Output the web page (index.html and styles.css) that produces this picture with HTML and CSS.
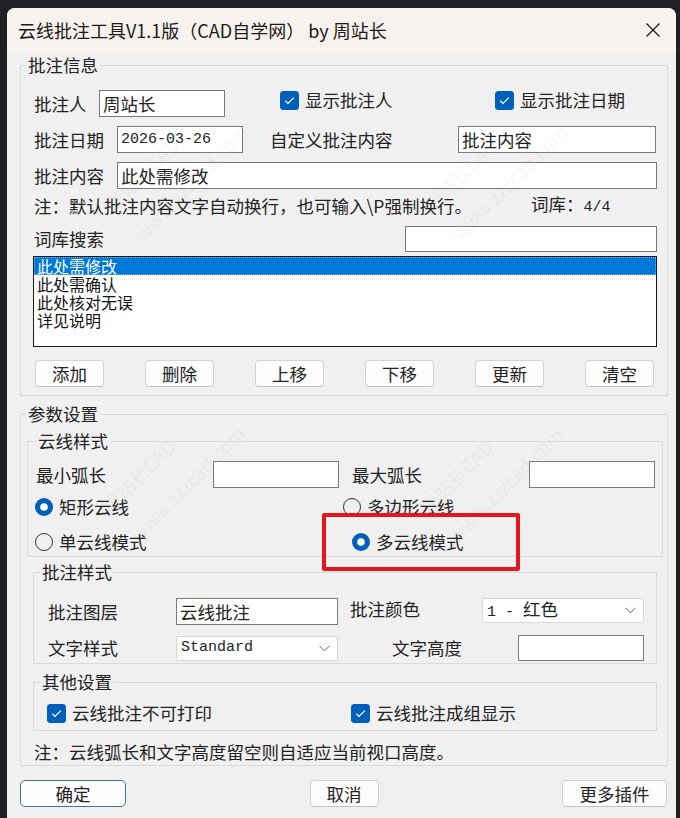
FILE: index.html
```html
<!DOCTYPE html>
<html lang="zh-CN">
<head>
  <meta charset="UTF-8" />
  <title>云线批注工具</title>
  <link rel="stylesheet" href="styles.css">
</head>
<body>

  <div class="window">
    <header class="titlebar">
      <span class="title">云线批注工具V1.1版（CAD自学网） by 周站长</span>
      <svg class="close" width="16" height="16" viewBox="0 0 16 16"><path d="M1.5 1.5 L14.5 14.5 M14.5 1.5 L1.5 14.5" stroke="#1a1a1a" stroke-width="1.3" fill="none"/></svg>
    </header>

    <main class="content">

      <fieldset class="group group-info">
        <legend>批注信息</legend>

        <div class="row">
          <label class="lbl lbl-person">批注人</label>
          <input class="field field-person" type="text" value="周站长" />
          <span class="check check-show-person">
            <svg width="19" height="19" viewBox="0 0 19 19"><rect width="19" height="19" rx="3.5" fill="#005fb8"/><path d="M5.2 9.8 L8 12.5 L13.8 6.7" stroke="#fff" stroke-width="1.2" fill="none"/></svg>
            显示批注人
          </span>
          <span class="check">
            <svg width="19" height="19" viewBox="0 0 19 19"><rect width="19" height="19" rx="3.5" fill="#005fb8"/><path d="M5.2 9.8 L8 12.5 L13.8 6.7" stroke="#fff" stroke-width="1.2" fill="none"/></svg>
            显示批注日期
          </span>
        </div>

        <div class="row row-gap">
          <label class="lbl lbl-wide">批注日期</label>
          <input class="field field-date mono" type="text" value="2026-03-26" />
          <label class="lbl lbl-custom">自定义批注内容</label>
          <input class="field field-custom" type="text" value="批注内容" />
        </div>

        <div class="row row-gap">
          <label class="lbl lbl-wide">批注内容</label>
          <input class="field field-grow" type="text" value="此处需修改" />
        </div>

        <div class="hint-row">
          <span class="hint">注：默认批注内容文字自动换行，也可输入\P强制换行。</span>
          <span>词库：<span class="mono">4/4</span></span>
        </div>

        <div class="row row-search">
          <label class="lbl">词库搜索</label>
          <input class="field field-search" type="text" value="" />
        </div>

        <ul class="listbox">
          <li class="selected">此处需修改</li>
          <li>此处需确认</li>
          <li>此处核对无误</li>
          <li>详见说明</li>
        </ul>

        <div class="btn-row">
          <button class="btn">添加</button>
          <button class="btn">删除</button>
          <button class="btn">上移</button>
          <button class="btn">下移</button>
          <button class="btn">更新</button>
          <button class="btn">清空</button>
        </div>
      </fieldset>

      <fieldset class="group group-params">
        <legend>参数设置</legend>

        <fieldset class="sub sub-cloud">
          <legend>云线样式</legend>
          <div class="row">
            <label class="lbl lbl-arc">最小弧长</label>
            <input class="field field-arc" type="text" value="" />
            <label class="lbl lbl-arc lbl-arc-max">最大弧长</label>
            <input class="field field-arc" type="text" value="" />
          </div>
          <div class="radio-row radio-row-1">
            <span class="radio radio-rect">
              <svg width="18" height="18" viewBox="0 0 18 18"><circle cx="9" cy="9" r="9" fill="#005fb8"/><circle cx="9" cy="9" r="3.8" fill="#fff"/></svg>
              矩形云线
            </span>
            <span class="radio">
              <svg width="18" height="18" viewBox="0 0 18 18"><circle cx="9" cy="9" r="8.5" fill="none" stroke="#333" stroke-width="1"/></svg>
              多边形云线
            </span>
          </div>
          <div class="radio-row radio-row-2">
            <span class="radio radio-single">
              <svg width="18" height="18" viewBox="0 0 18 18"><circle cx="9" cy="9" r="8.5" fill="none" stroke="#333" stroke-width="1"/></svg>
              单云线模式
            </span>
            <span class="radio">
              <svg width="18" height="18" viewBox="0 0 18 18"><circle cx="9" cy="9" r="9" fill="#005fb8"/><circle cx="9" cy="9" r="3.8" fill="#fff"/></svg>
              多云线模式
            </span>
          </div>
        </fieldset>

        <fieldset class="sub sub-note">
          <legend>批注样式</legend>
          <div class="row">
            <label class="lbl lbl-style">批注图层</label>
            <input class="field field-layer" type="text" value="云线批注" />
            <label class="lbl lbl-color">批注颜色</label>
            <div class="select select-color">
              <span><span class="mono">1 - </span>红色</span>
              <svg width="11" height="7" viewBox="0 0 11 7"><path d="M0.5 0.8 L5.5 5.8 L10.5 0.8" stroke="#666" stroke-width="1" fill="none"/></svg>
            </div>
          </div>
          <div class="row row-style-2">
            <label class="lbl lbl-style">文字样式</label>
            <div class="select select-style">
              <span class="mono">Standard</span>
              <svg width="11" height="7" viewBox="0 0 11 7"><path d="M0.5 0.8 L5.5 5.8 L10.5 0.8" stroke="#666" stroke-width="1" fill="none"/></svg>
            </div>
            <label class="lbl lbl-height">文字高度</label>
            <input class="field field-height" type="text" value="" />
          </div>
        </fieldset>

        <fieldset class="sub sub-other">
          <legend>其他设置</legend>
          <div class="row row-checks">
            <span class="check check-noprint">
              <svg width="19" height="19" viewBox="0 0 19 19"><rect width="19" height="19" rx="3.5" fill="#005fb8"/><path d="M5.2 9.8 L8 12.5 L13.8 6.7" stroke="#fff" stroke-width="1.2" fill="none"/></svg>
              云线批注不可打印
            </span>
            <span class="check">
              <svg width="19" height="19" viewBox="0 0 19 19"><rect width="19" height="19" rx="3.5" fill="#005fb8"/><path d="M5.2 9.8 L8 12.5 L13.8 6.7" stroke="#fff" stroke-width="1.2" fill="none"/></svg>
              云线批注成组显示
            </span>
          </div>
        </fieldset>

        <p class="footnote">注：云线弧长和文字高度留空则自适应当前视口高度。</p>
      </fieldset>

      <div class="actions">
        <button class="btn btn-ok">确定</button>
        <button class="btn">取消</button>
        <button class="btn btn-more">更多插件</button>
      </div>
    </main>

    <!-- red annotation frame drawn over the dialog -->
    <div class="mark"></div>

    <div class="watermarks">
      <span class="wm wm-1">周站长CAD<br>www.zzzcad.com</span>
      <span class="wm wm-2">周站长CAD<br>www.zzzcad.com</span>
      <span class="wm wm-3">周站长CAD<br>www.zzzcad.com</span>
      <span class="wm wm-4">周站长CAD<br>www.zzzcad.com</span>
    </div>
  </div>

</body>
</html>
```

FILE: styles.css
```css
/* Reset and Base Styles */
* {
  margin: 0;
  padding: 0;
  box-sizing: border-box;
}

body {
  background: #1f2023;
  font-family: "Noto Sans CJK SC", "Liberation Sans", sans-serif;
  font-size: 17.5px;
  color: #1f1f1f;
  height: 818px;
  overflow: hidden;
}

.mono {
  font-family: "Liberation Mono", "Noto Sans CJK SC", monospace;
  font-size: 15px;
}

.window {
  position: relative;
  margin: 8px 0 0 7px;
  width: 669px;
  height: 810px;
  background: #f0f0f0;
  border-radius: 8px 8px 0 0;
  overflow: hidden;
}

/* Title bar */
.titlebar {
  height: 44px;
  background: #f8f2ee;
  display: flex;
  align-items: center;
  justify-content: space-between;
  padding: 0 15px 0 11px;
}

.title {
  font-size: 18px;
  line-height: 22px;
  color: #1a1a1a;
}

.content {
  padding: 3px 8px 0 13px;
}

/* Group boxes */
fieldset {
  min-width: 0;
  border: 1px solid #dadada;
}

legend {
  line-height: 20px;
  padding: 0 2px;
  color: #222;
}

.group-info {
  padding: 15px 10px 8px 13px;
}

.group-info legend {
  margin-left: -8px;
}

.group-params {
  margin-top: 8px;
  padding: 7px 4px 3px 6px;
}

.group-params > legend {
  margin-left: -1px;
}

.sub-cloud {
  padding: 10px 7px 3px 8px;
}

.sub-note {
  margin: 5px 6px 0;
  padding: 16px 10px 2px 14px;
}

.sub-note legend {
  margin-left: -8px;
}

.sub-other {
  margin: 8px 6px 0;
  padding: 10px 10px 6px 13px;
}

.sub-other legend {
  margin-left: -7px;
}

/* Rows */
.row {
  display: flex;
  align-items: center;
  height: 27px;
}

.row-gap {
  margin-top: 9px;
}

.lbl {
  line-height: 20px;
  white-space: nowrap;
  color: #222;
}

.lbl-person { width: 65px; }
.lbl-wide { width: 83px; }
.lbl-custom { width: 188px; margin-left: 27px; }
.lbl-arc { width: 177px; }
.lbl-arc-max { margin-left: 13px; }
.lbl-style { width: 128px; }
.lbl-color { width: 132px; margin-left: 12px; margin-top: -6px; }
.lbl-height { width: 126px; margin-left: 54px; }

.field {
  height: 27px;
  border: 1px solid #7a7a7a;
  background: #fff;
  padding: 0 3px;
  font-family: inherit;
  font-size: 17.5px;
  color: #222;
  outline: none;
}

.field.mono {
  font-size: 15px;
  font-family: "Liberation Mono", monospace;
}

.field-person { width: 126px; }
.field-date { width: 126px; }
.field-custom { width: 198px; }
.field-grow { flex: 1; }
.field-arc { width: 126px; }
.field-layer { width: 162px; }
.field-height { width: 126px; height: 26px; }

.field-search {
  margin-left: auto;
  width: 252px;
  height: 26px;
}

.check {
  display: flex;
  align-items: center;
  gap: 6px;
  line-height: 20px;
  white-space: nowrap;
  color: #222;
}

.check-show-person {
  margin-left: 55px;
  width: 215px;
}

.group-info .check {
  margin-top: -7px;
}

.check-noprint { width: 304px; }

.hint-row {
  display: flex;
  align-items: center;
  height: 20px;
  margin-top: 7px;
  line-height: 20px;
  color: #222;
}

.hint { width: 497px; }

.row-search {
  margin-top: 10px;
  height: 26px;
}

/* List box */
.listbox {
  list-style: none;
  margin: 4px 0 0 -1px;
  height: 91px;
  background: #fff;
  border: 1px solid #1a1a1a;
  font-size: 16px;
  line-height: 18px;
  color: #111;
}

.listbox li {
  padding-left: 3px;
  height: 18px;
  white-space: nowrap;
}

.listbox li.selected {
  background: #0078d7;
  color: #fff;
  outline: 1px dotted #7fb5e6;
  outline-offset: -1px;
}

/* Buttons */
.btn-row {
  display: flex;
  gap: 41px;
  margin: 13px 0 0 1px;
}

.btn {
  width: 69px;
  height: 27px;
  background: #fdfdfd;
  border: 1px solid #d3d3d3;
  border-bottom-color: #c4c4c4;
  border-radius: 4px;
  font-family: inherit;
  font-size: 17.5px;
  line-height: 20px;
  color: #222;
}

/* Cloud style radios */
.radio-row {
  display: flex;
  align-items: center;
  height: 22px;
  margin-left: -1px;
}

.radio-row-1 { margin-top: 8px; }
.radio-row-2 { margin-top: 13px; }

.radio {
  display: flex;
  align-items: center;
  gap: 6px;
  line-height: 20px;
  white-space: nowrap;
  color: #222;
}

.radio-rect { width: 308px; }
.radio-single { width: 317px; }

.row-style-2 {
  margin-top: 10px;
  height: 26px;
}

.select {
  display: flex;
  align-items: center;
  justify-content: space-between;
  width: 162px;
  height: 25px;
  background: #fff;
  border: 1px solid #d8d8d8;
  border-radius: 2px;
  padding: 0 7px 0 4px;
  line-height: 20px;
  color: #222;
}

.select-color {
  align-self: flex-start;
}

.row-checks {
  height: 22px;
}

.footnote {
  margin-top: 11px;
  padding-left: 7px;
  line-height: 20px;
  color: #222;
}

/* Dialog buttons */
.actions {
  display: flex;
  justify-content: space-between;
  margin: 14px 1px 0 0;
}

.btn-ok {
  width: 106px;
  border-color: #4a7391;
  border-radius: 5px;
}

.btn-more { width: 105px; }

/* Red frame over the multi-cloud option */
.mark {
  position: absolute;
  left: 315px;
  top: 505px;
  width: 198px;
  height: 58px;
  border: 4px solid #e6161c;
  border-radius: 2px;
}

/* Watermark overlay */
.watermarks {
  position: absolute;
  inset: 0;
  pointer-events: none;
}

.wm {
  position: absolute;
  transform: translate(-50%, -50%) rotate(-45deg);
  font-size: 19px;
  line-height: 40px;
  color: rgba(0, 0, 0, 0.05);
  white-space: nowrap;
}

.wm-1 { left: 170px; top: 160px; }
.wm-2 { left: 488px; top: 160px; }
.wm-3 { left: 166px; top: 461px; }
.wm-4 { left: 484px; top: 462px; }
```
